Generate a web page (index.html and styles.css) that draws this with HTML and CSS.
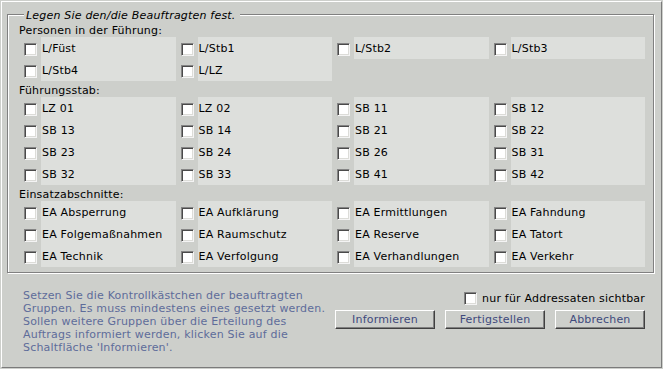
FILE: index.html
```html
<!DOCTYPE html>
<html lang="de">
<head>
  <meta charset="UTF-8" />
  <title>Beauftragte festlegen</title>
  <link rel="stylesheet" href="styles.css">
</head>
<body>
  <div class="window">
    <fieldset class="assign">
      <legend>Legen Sie den/die Beauftragten fest.</legend>

      <div class="sect-title">Personen in der Führung:</div>
      <div class="opts">
        <label class="opt"><input type="checkbox"><span>L/Füst</span></label>
        <label class="opt"><input type="checkbox"><span>L/Stb1</span></label>
        <label class="opt"><input type="checkbox"><span>L/Stb2</span></label>
        <label class="opt"><input type="checkbox"><span>L/Stb3</span></label>
        <label class="opt"><input type="checkbox"><span>L/Stb4</span></label>
        <label class="opt"><input type="checkbox"><span>L/LZ</span></label>
      </div>

      <div class="sect-title">Führungsstab:</div>
      <div class="opts">
        <label class="opt"><input type="checkbox"><span>LZ 01</span></label>
        <label class="opt"><input type="checkbox"><span>LZ 02</span></label>
        <label class="opt"><input type="checkbox"><span>SB 11</span></label>
        <label class="opt"><input type="checkbox"><span>SB 12</span></label>
        <label class="opt"><input type="checkbox"><span>SB 13</span></label>
        <label class="opt"><input type="checkbox"><span>SB 14</span></label>
        <label class="opt"><input type="checkbox"><span>SB 21</span></label>
        <label class="opt"><input type="checkbox"><span>SB 22</span></label>
        <label class="opt"><input type="checkbox"><span>SB 23</span></label>
        <label class="opt"><input type="checkbox"><span>SB 24</span></label>
        <label class="opt"><input type="checkbox"><span>SB 26</span></label>
        <label class="opt"><input type="checkbox"><span>SB 31</span></label>
        <label class="opt"><input type="checkbox"><span>SB 32</span></label>
        <label class="opt"><input type="checkbox"><span>SB 33</span></label>
        <label class="opt"><input type="checkbox"><span>SB 41</span></label>
        <label class="opt"><input type="checkbox"><span>SB 42</span></label>
      </div>

      <div class="sect-title">Einsatzabschnitte:</div>
      <div class="opts">
        <label class="opt"><input type="checkbox"><span>EA Absperrung</span></label>
        <label class="opt"><input type="checkbox"><span>EA Aufklärung</span></label>
        <label class="opt"><input type="checkbox"><span>EA Ermittlungen</span></label>
        <label class="opt"><input type="checkbox"><span>EA Fahndung</span></label>
        <label class="opt"><input type="checkbox"><span>EA Folgemaßnahmen</span></label>
        <label class="opt"><input type="checkbox"><span>EA Raumschutz</span></label>
        <label class="opt"><input type="checkbox"><span>EA Reserve</span></label>
        <label class="opt"><input type="checkbox"><span>EA Tatort</span></label>
        <label class="opt"><input type="checkbox"><span>EA Technik</span></label>
        <label class="opt"><input type="checkbox"><span>EA Verfolgung</span></label>
        <label class="opt"><input type="checkbox"><span>EA Verhandlungen</span></label>
        <label class="opt"><input type="checkbox"><span>EA Verkehr</span></label>
      </div>
    </fieldset>

    <div class="footer">
      <p class="hint">
        Setzen Sie die Kontrollkästchen der beauftragten<br>
        Gruppen. Es muss mindestens eines gesetzt werden.<br>
        Sollen weitere Gruppen über die Erteilung des<br>
        Auftrags informiert werden, klicken Sie auf die<br>
        Schaltfläche 'Informieren'.
      </p>
      <div class="actions">
        <label class="visible"><input type="checkbox"><span>nur für Addressaten sichtbar</span></label>
        <div class="buttons">
          <button class="btn">Informieren</button>
          <button class="btn">Fertigstellen</button>
          <button class="btn btn-small">Abbrechen</button>
        </div>
      </div>
    </div>
  </div>
</body>
</html>
```

FILE: styles.css
```css
body {
  margin: 0;
  background: #cdcfcb;
  font-family: 'DejaVu Sans', Verdana, sans-serif;
  font-size: 11px;
  letter-spacing: 0.2px;
  color: #000;
  overflow: hidden;
}
.window {
  margin: 1px 0 0 1px;
  width: 661px;
  height: 367px;
  box-sizing: border-box;
  border: 1px solid;
  border-color: #fff #7b7b7b #7b7b7b #fff;
}
.assign {
  margin: 5px 0 0 5px;
  width: 647px;
  box-sizing: border-box;
  padding: 3px 8px 5px 11px;
  border: 1px solid #808080;
  /* groove look: light line inside top/left, outside bottom/right */
  box-shadow: inset 1px 1px 0 #fff, 1px 1px 0 #fff;
}
.assign legend {
  margin-left: 5px;
  padding: 2px 4px 0 2px;
  line-height: 13px;
  font-style: italic;
  background: #cdcfcb;
}
.sect-title {
  line-height: 12px;
}
.opts + .sect-title {
  margin-top: 4px;
}
.opts {
  display: grid;
  grid-template-columns: repeat(4, 1fr);
  column-gap: 5px;
  padding-left: 5px;
}
.opt {
  display: flex;
  align-items: flex-start;
  height: 22px;
}
input[type="checkbox"] {
  appearance: none;
  -webkit-appearance: none;
  flex: none;
  width: 13px;
  height: 13px;
  margin: 0;
  background: #fff;
  border: 1px solid;
  border-color: #848484 #f4f4f4 #f4f4f4 #848484;
  box-shadow: inset 1px 1px 0 #4a4a4a, inset -1px -1px 0 #dcdcd8;
}
.opt input {
  margin: 6px 4px 0 0;
}
.opt span {
  flex: 1;
  align-self: stretch;
  background: #dddfdc;
  padding: 5px 0 0 1px;
  line-height: 13px;
}
.footer {
  display: flex;
  padding: 16px 16px 0 21px;
}
.hint {
  margin: 0;
  line-height: 13px;
  color: #5e6c9a;
}
.actions {
  margin-left: auto;
  display: flex;
  flex-direction: column;
  align-items: flex-end;
}
.visible {
  display: flex;
  align-items: flex-start;
  margin-top: 3px;
  line-height: 13px;
}
.visible input {
  margin-right: 5px;
}
.buttons {
  display: flex;
  gap: 10px;
  margin-top: 5px;
}
.btn {
  width: 100px;
  height: 19px;
  padding: 0;
  font-family: 'DejaVu Sans', Verdana, sans-serif;
  font-size: 11px;
  letter-spacing: 0.2px;
  line-height: 15px;
  color: #3f4a7d;
  background: #cdcfcb;
  border: 1px solid;
  border-color: #fff #404040 #404040 #fff;
  box-shadow: inset -1px -1px 0 #808080;
}
.btn-small {
  width: 90px;
}
```
